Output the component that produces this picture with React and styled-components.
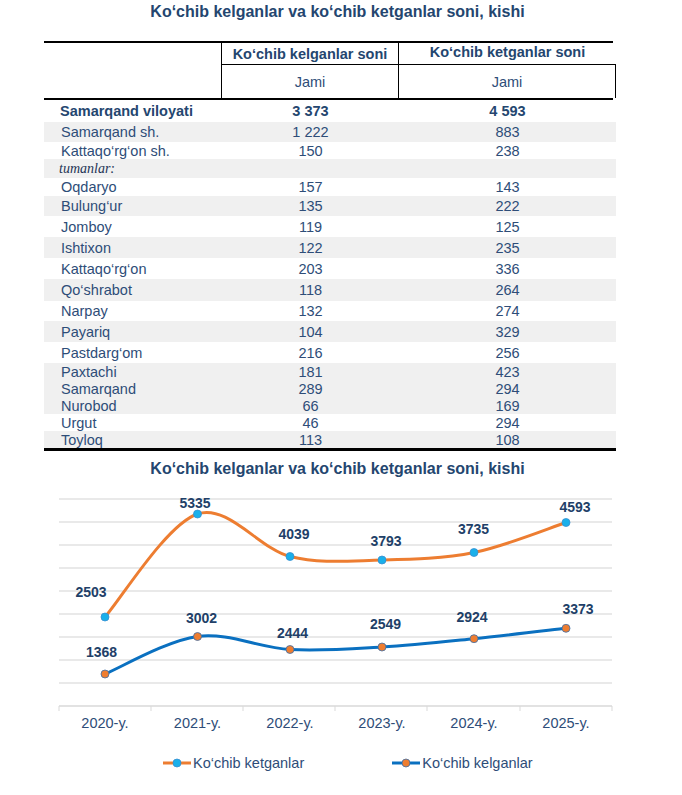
import styled, { createGlobalStyle } from "styled-components"

const GlobalStyle = createGlobalStyle`
    body{
        margin: 0;
        background: #fff;
        font-family: "Liberation Sans", Arial, sans-serif;
    }
`

const rows = [
    { name: "Samarqand viloyati", a: "3 373", b: "4 593", h: 22, bold: true },
    { name: "Samarqand sh.", a: "1 222", b: "883", h: 20, shade: true },
    { name: "Kattaqo‘rg‘on sh.", a: "150", b: "238", h: 17 },
    { name: "tumanlar:", a: "", b: "", h: 19, shade: true, note: true },
    { name: "Oqdaryo", a: "157", b: "143", h: 18 },
    { name: "Bulung‘ur", a: "135", b: "222", h: 20, shade: true },
    { name: "Jomboy", a: "119", b: "125", h: 21 },
    { name: "Ishtixon", a: "122", b: "235", h: 21, shade: true },
    { name: "Kattaqo‘rg‘on", a: "203", b: "336", h: 21 },
    { name: "Qo‘shrabot", a: "118", b: "264", h: 22, shade: true },
    { name: "Narpay", a: "132", b: "274", h: 20 },
    { name: "Payariq", a: "104", b: "329", h: 21, shade: true },
    { name: "Pastdarg‘om", a: "216", b: "256", h: 21 },
    { name: "Paxtachi", a: "181", b: "423", h: 17, shade: true },
    { name: "Samarqand", a: "289", b: "294", h: 17, shade: true },
    { name: "Nurobod", a: "66", b: "169", h: 17, shade: true },
    { name: "Urgut", a: "46", b: "294", h: 17 },
    { name: "Toyloq", a: "113", b: "108", h: 17, shade: true },
]

const years = ["2020-y.", "2021-y.", "2022-y.", "2023-y.", "2024-y.", "2025-y."]
const xs = [105, 197.5, 290, 382, 474, 566]

// y positions read off the picture (page coordinates)
const leaving = {
    pts: [617, 514, 556.5, 560, 552.5, 522.5],
    labels: [
        ["2503", 91, 592], ["5335", 195, 503], ["4039", 294, 534],
        ["3793", 386, 541], ["3735", 473.5, 529], ["4593", 575, 507],
    ],
}
const arriving = {
    pts: [674, 636.5, 649.5, 647, 638.7, 628.3],
    labels: [
        ["1368", 101.5, 652], ["3002", 201.5, 618], ["2444", 292.5, 633],
        ["2549", 385.5, 624], ["2924", 472, 617], ["3373", 578, 609],
    ],
}

const gridYs = [499, 522, 545, 568, 591, 614, 637, 660, 683]
const ticks = [59, 151, 243, 335, 427, 520, 612]

function smooth(ys) {
    const pts = ys.map((y, i) => [xs[i], y])
    let d = `M${pts[0][0]},${pts[0][1]}`
    for (let i = 0; i < pts.length - 1; i++) {
        const p0 = pts[i - 1] || pts[i]
        const p1 = pts[i]
        const p2 = pts[i + 1]
        const p3 = pts[i + 2] || p2
        const c1 = [p1[0] + (p2[0] - p0[0]) / 6, p1[1] + (p2[1] - p0[1]) / 6]
        const c2 = [p2[0] - (p3[0] - p1[0]) / 6, p2[1] - (p3[1] - p1[1]) / 6]
        d += ` C${c1[0]},${c1[1]} ${c2[0]},${c2[1]} ${p2[0]},${p2[1]}`
    }
    return d
}

function Series({ data, line, dot, ring }) {
    return (
        <g>
            <path d={smooth(data.pts)} fill="none" stroke={line} strokeWidth="3" strokeLinecap="round" />
            {data.pts.map((y, i) => (
                <circle key={i} cx={xs[i]} cy={y} r="4" fill={dot} stroke={ring} strokeWidth="0.8" />
            ))}
            {data.labels.map(([t, x, y]) => (
                <ValueLabel key={t} x={x} y={y + 5} textAnchor="middle">{t}</ValueLabel>
            ))}
        </g>
    )
}

function LegendKey({ line, dot, ring }) {
    return (
        <svg width="28" height="10" viewBox="0 0 28 10">
            <line x1="0" y1="5" x2="28" y2="5" stroke={line} strokeWidth="3" />
            <circle cx="14" cy="5" r="4" fill={dot} stroke={ring} strokeWidth="0.8" />
        </svg>
    )
}

function App() {
    return (
        <Page>
            <GlobalStyle />
            <Title>Ko‘chib kelganlar va ko‘chib ketganlar soni, kishi</Title>

            <Table>
                <Head>
                    <HeadCell $span $right />
                    <HeadCell $bold $right $bottom>Ko‘chib kelganlar soni</HeadCell>
                    <HeadCell $bold $bottom $lift>Ko‘chib ketganlar soni</HeadCell>
                    <HeadCell $right>Jami</HeadCell>
                    <HeadCell $right>Jami</HeadCell>
                </Head>

                <Body>
                    {rows.map((r) => (
                        <Row key={r.name + r.a} $h={r.h} $shade={r.shade} $bold={r.bold}>
                            {r.note ? <Note>{r.name}</Note> : <Name $bold={r.bold}>{r.name}</Name>}
                            <Num>{r.a}</Num>
                            <Num>{r.b}</Num>
                        </Row>
                    ))}
                </Body>
            </Table>

            <ChartTitle>Ko‘chib kelganlar va ko‘chib ketganlar soni, kishi</ChartTitle>

            <Chart width="682" height="267" viewBox="0 479 682 267">
                {gridYs.map((y) => (
                    <line key={y} x1="59" x2="612" y1={y} y2={y} stroke="#e2e2e2" strokeWidth="1.5" />
                ))}
                <line x1="59" x2="612" y1="706" y2="706" stroke="#d9d9d9" strokeWidth="1.5" />
                {ticks.map((x) => (
                    <line key={x} x1={x} x2={x} y1="706" y2="711" stroke="#d9d9d9" strokeWidth="1" />
                ))}
                {years.map((t, i) => (
                    <AxisLabel key={t} x={xs[i]} y="728" textAnchor="middle">{t}</AxisLabel>
                ))}
                <Series data={leaving} line="#ed7d31" dot="#1ab0ea" ring="#3a8fd0" />
                <Series data={arriving} line="#0a70c0" dot="#ee7d30" ring="#3d6fa8" />
            </Chart>

            <Legend>
                <LegendItem>
                    <LegendKey line="#ed7d31" dot="#1ab0ea" ring="#3a8fd0" />
                    <span>Ko‘chib ketganlar</span>
                </LegendItem>
                <LegendItem>
                    <LegendKey line="#0a70c0" dot="#ee7d30" ring="#3d6fa8" />
                    <span>Ko‘chib kelganlar</span>
                </LegendItem>
            </Legend>
        </Page>
    )
}

const Page = styled.div`
    width: 682px;
    height: 795px;
    overflow: hidden;
    color: #2e4d78;
`

const Title = styled.h2`
    width: 675px;
    margin: 0;
    padding-top: 2px;
    font-size: 16px;
    line-height: 20px;
    font-weight: 700;
    text-align: center;
    color: #24466f;
`

const ChartTitle = styled(Title)`
    padding-top: 0;
    margin-top: 8px;
`

const Table = styled.div`
    width: 572px;
    margin: 19px 0 0 44px;
`

const Head = styled.div`
    display: grid;
    grid-template-columns: 178px 177px 217px;
    grid-template-rows: 22px 33px;
    border-top: 2px solid #000;
    border-bottom: 2px solid #000;
    width: 569px;
`

const HeadCell = styled.div`
    box-sizing: border-box;
    display: flex;
    align-items: center;
    justify-content: center;
    font-size: 14.5px;
    font-weight: ${(p) => (p.$bold ? 700 : 400)};
    color: ${(p) => (p.$bold ? "#24466f" : "#2e4d78")};
    grid-row: ${(p) => (p.$span ? "span 2" : "auto")};
    border-right: ${(p) => (p.$right ? "1px solid #000" : "none")};
    border-bottom: ${(p) => (p.$bottom ? "1px solid #000" : "none")};
    padding-bottom: ${(p) => (p.$lift ? "4px" : "0")};
`

const Body = styled.div`
    border-bottom: 3px solid #000;
`

const Row = styled.div`
    display: grid;
    grid-template-columns: 178px 177px 217px;
    align-items: center;
    height: ${(p) => p.$h}px;
    background: ${(p) => (p.$shade ? "#f0f0f0" : "#fff")};
    font-size: 14.5px;
    font-weight: ${(p) => (p.$bold ? 700 : 400)};
    color: ${(p) => (p.$bold ? "#24466f" : "#2e4d78")};
`

const Name = styled.span`
    padding-left: ${(p) => (p.$bold ? "16px" : "17px")};
    white-space: nowrap;
`

const Note = styled.span`
    padding-left: 15px;
    font-family: "Liberation Serif", "Times New Roman", serif;
    font-style: italic;
    font-size: 14px;
    color: #1f3556;
`

const Num = styled.span`
    text-align: center;
`

const Chart = styled.svg`
    display: block;
`

const ValueLabel = styled.text`
    font-family: "Liberation Sans", Arial, sans-serif;
    font-size: 14px;
    font-weight: 700;
    fill: #213f68;
`

const AxisLabel = styled.text`
    font-family: "Liberation Sans", Arial, sans-serif;
    font-size: 14.5px;
    fill: #2e4d78;
`

const Legend = styled.div`
    display: flex;
    align-items: center;
    gap: 88px;
    height: 20px;
    margin-top: 7px;
    padding-left: 163px;
`

const LegendItem = styled.div`
    display: flex;
    align-items: center;
    gap: 2px;
    font-size: 14.5px;
    color: #2e4d78;
`

export default App
